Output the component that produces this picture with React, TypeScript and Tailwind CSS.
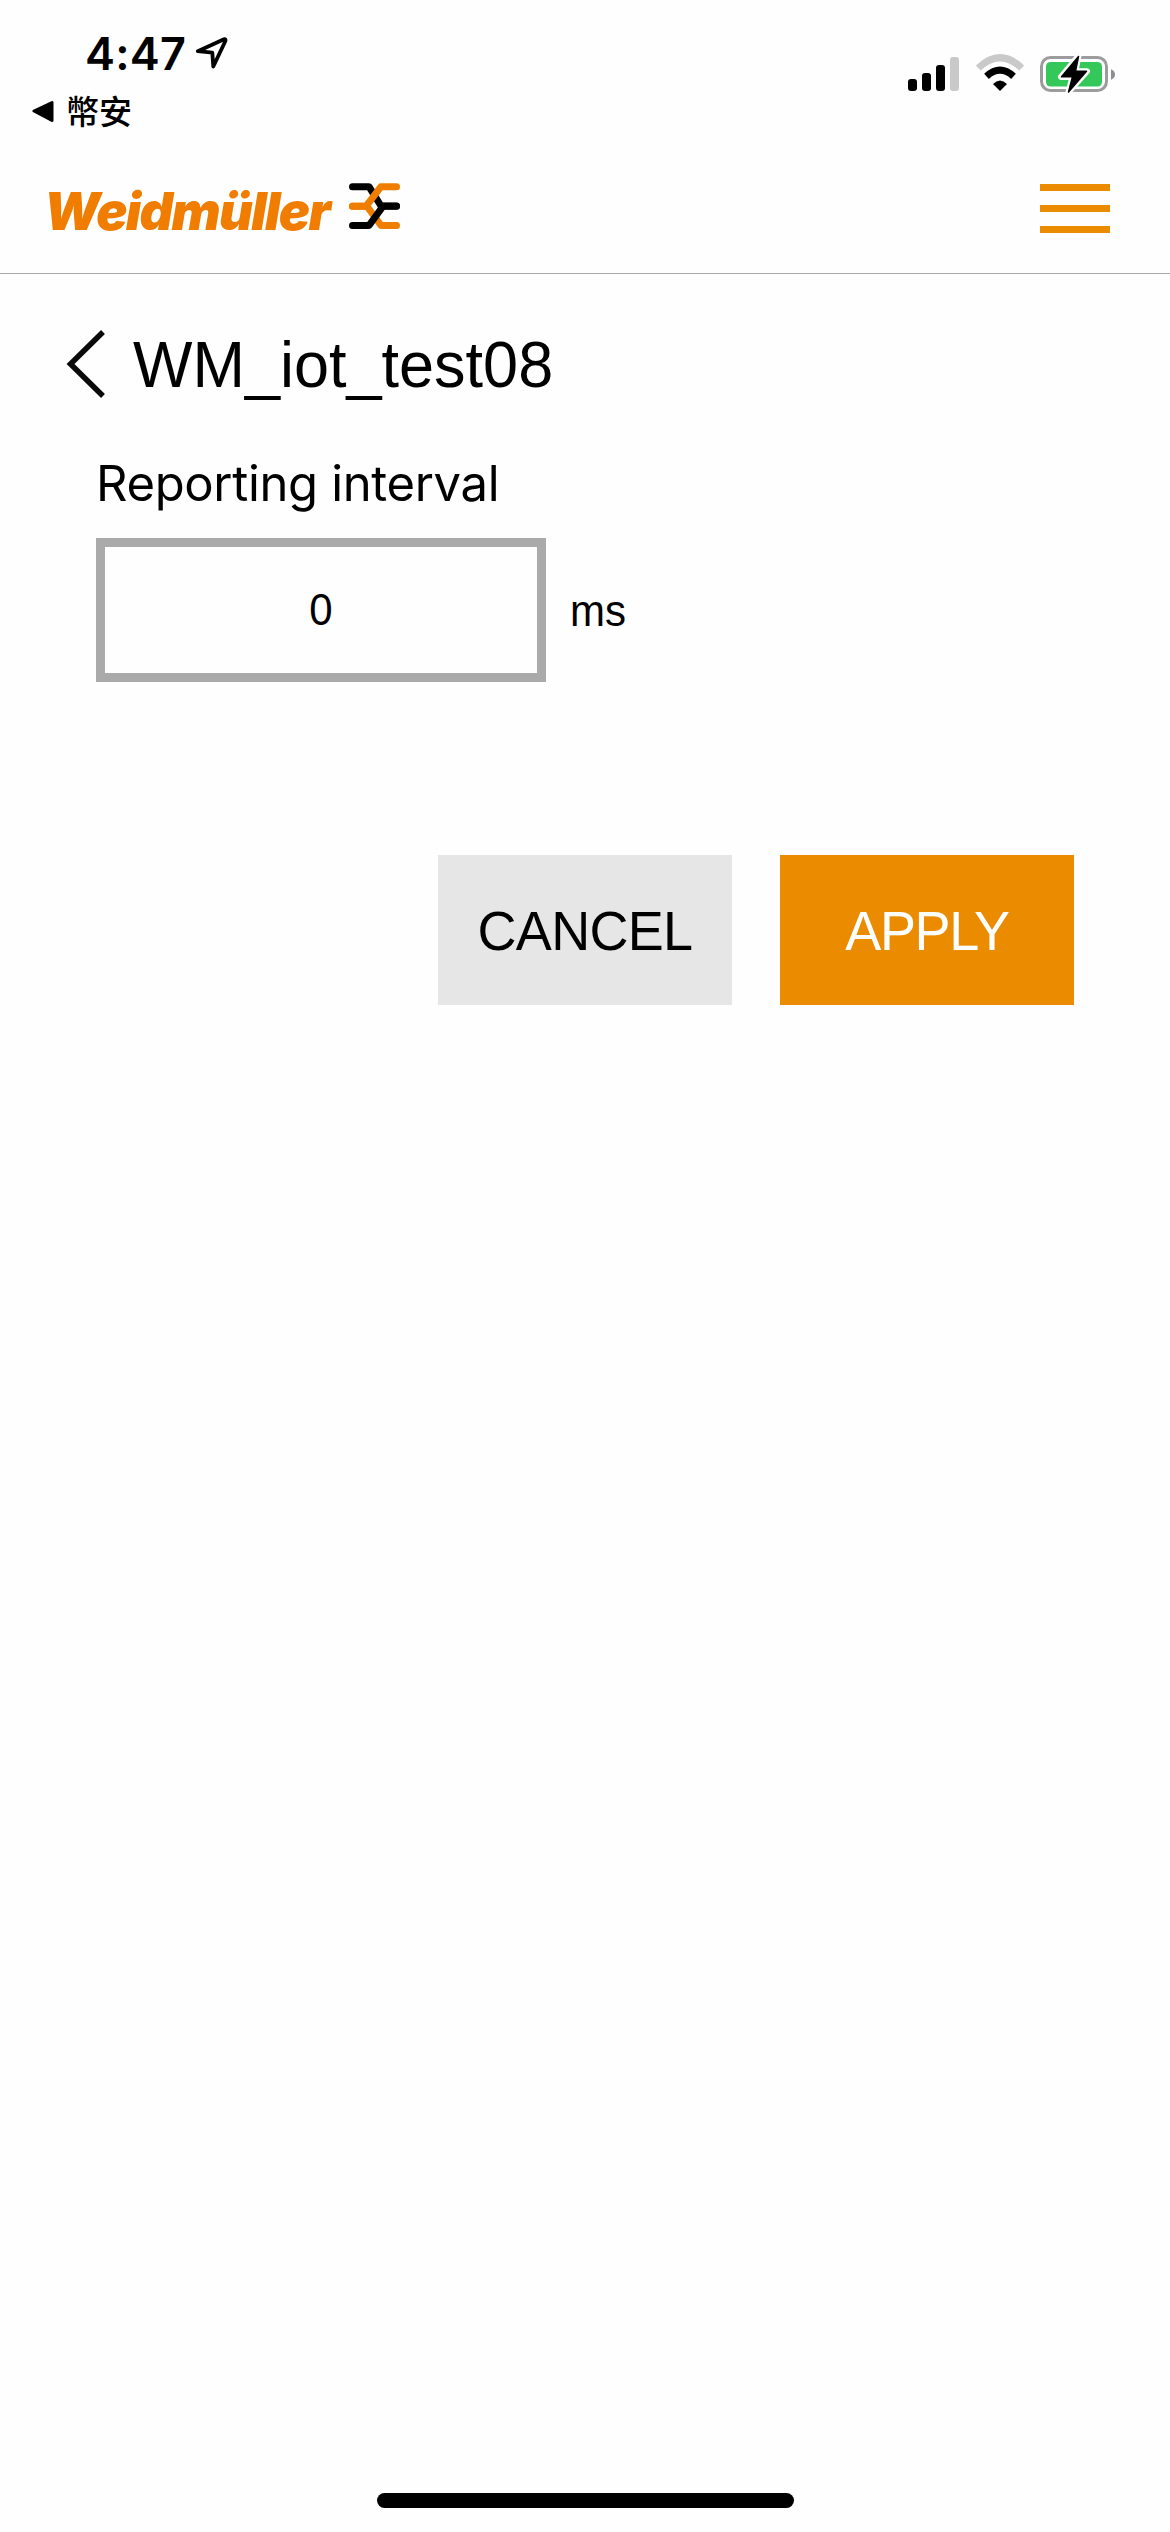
import React from "react";

function StatusBar() {
  return (
    <div className="flex h-[150px] justify-between">
      <div className="flex flex-col">
        <div className="flex h-[86px] items-start pl-[85px] pt-[26px]">
          <span className="w-[110px] whitespace-nowrap text-[45px] font-semibold leading-[55px] tracking-[0.2px]">4:47</span>
          <svg className="mt-[10px] h-[34px] w-[34px]" viewBox="0 0 34 34" fill="none" stroke="#000" strokeWidth="3.8" strokeLinejoin="round">
            <path d="M2.8 15.2 L29 3.2 Q31 2.6 30.4 5 L18.3 30.5 L17.3 16.6 Z" />
          </svg>
        </div>
        <div className="flex h-[50px] items-center pl-[32px]">
          <svg className="h-[22px] w-[22px]" viewBox="0 0 22 22">
            <path d="M2 11 L20 2.5 V20.5 Z" stroke="#000" strokeWidth="3" strokeLinejoin="round" />
          </svg>
          <span className="-mt-[3px] ml-[12px] font-['Noto_Sans_CJK_TC',sans-serif] text-[33px] font-medium leading-[50px]">幣安</span>
        </div>
      </div>
      <div className="flex items-start pr-[53px] pt-[54px]">
        <div className="mt-[3px] flex h-[34px] items-end gap-[5px]">
          <div className="h-[12px] w-[9px] rounded-[3px] bg-black" />
          <div className="h-[18px] w-[9px] rounded-[3px] bg-black" />
          <div className="h-[26px] w-[9px] rounded-[3px] bg-black" />
          <div className="h-[34px] w-[9px] rounded-[3px] bg-[#c9c9c9]" />
        </div>
        <svg className="ml-[16px] h-[38px] w-[50px]" viewBox="0 0 50 38" fill="none">
          <path d="M3.3 14 Q25 -6.6 46.7 14" stroke="#c9c9c9" strokeWidth="7" />
          <path d="M11.5 22.3 Q25 10 38.5 22.3" stroke="#000" strokeWidth="7" />
          <path d="M18 30 Q25 22.8 32 30 L25 37 Z" fill="#000" />
        </svg>
        <svg className="ml-[15px] h-[40px] w-[77px]" viewBox="0 0 77 40">
          <rect x="1.5" y="3.5" width="65" height="33" rx="9" fill="none" stroke="#9c9c9e" strokeWidth="3" />
          <path d="M71 15.3 Q75 17 75 20.5 Q75 24 71 25.7 Z" fill="#8e8e90" />
          <rect x="6" y="8" width="56" height="24.5" rx="4.5" fill="#34c759" />
          <path d="M38.5 2 L21 23 H32.5 L28.5 38 L47 17.3 H35.5 Z" fill="#fff" stroke="#fff" strokeWidth="6" strokeLinejoin="round" />
          <path d="M38.5 2.5 L21.5 22.8 H32.5 L28.5 38 L46.5 17.3 H35.5 Z" fill="#000" stroke="#000" strokeWidth="1.5" strokeLinejoin="round" />
        </svg>
      </div>
    </div>
  );
}

function Header() {
  return (
    <header className="flex h-[124px] items-start justify-between border-b border-[#aaaaaa] pl-[44px] pr-[60px]">
      <div className="flex">
        <span className="mt-[31px] w-[303px] whitespace-nowrap text-[52px] font-black italic leading-[62px] tracking-[-1.6px] text-[#f07d00]">
          Weidmüller
        </span>
        <svg className="mt-[32px] h-[50px] w-[56px]" viewBox="0 0 56 50" fill="none" strokeWidth="7" strokeLinecap="round" strokeLinejoin="round">
          <path d="M5.5 4.7 H22 L34 24 H49.5" stroke="#000" />
          <path d="M5.5 24.3 H20 L34 43.5 H49.5" stroke="#ef7d00" />
          <path d="M5.5 24.3 H19 L34 4.7 H49.5" stroke="#ef7d00" />
          <path d="M5.5 43.5 H22 L36 24.3 H49.5" stroke="#000" />
        </svg>
      </div>
      <button aria-label="Menu" className="mt-[34px] flex w-[70px] flex-col gap-[14px]">
        <span className="h-[7px] bg-[#eb8c00]" />
        <span className="h-[7px] bg-[#eb8c00]" />
        <span className="h-[7px] bg-[#eb8c00]" />
      </button>
    </header>
  );
}

export default function App() {
  return (
    <div className="flex h-[2532px] w-[1170px] flex-col bg-[#fefefe] font-['Inter',sans-serif] text-black">
      <StatusBar />
      <Header />
      <main className="flex-1 font-['Liberation_Sans',sans-serif]">
        <div className="flex h-[180px] items-start pl-[66px] pt-[55px]">
          <svg className="h-[70px] w-[40px]" viewBox="0 0 40 70" fill="none" stroke="#0a0a0a" strokeWidth="5.5">
            <path d="M37 3 L4.5 35 L37 67" />
          </svg>
          <h1 className="-mt-[1px] ml-[27px] scale-y-[1.04] whitespace-nowrap text-[63px] leading-[72px]">WM_iot_test08</h1>
        </div>
        <div className="px-[96px]">
          <label className="block h-[84px] whitespace-nowrap font-['Inter',sans-serif] text-[49px] leading-[60px] tracking-[-0.35px]">Reporting interval</label>
          <div className="flex items-center">
            <div className="flex h-[144px] w-[450px] items-center justify-center border-[9px] border-[#aaaaaa]">
              <span className="scale-y-[1.04] text-[42px] leading-[48px]">0</span>
            </div>
            <span className="ml-[24px] mt-[2px] scale-y-[1.04] text-[42px] leading-[48px]">ms</span>
          </div>
          <div className="mt-[173px] flex justify-end gap-[48px]">
            <button className="flex h-[150px] w-[294px] items-center justify-center bg-[#e6e6e6] text-[54px]">
              <span className="scale-y-[1.04] tracking-[-0.7px]">CANCEL</span>
            </button>
            <button className="flex h-[150px] w-[294px] items-center justify-center bg-[#eb8c00] text-[54px] text-white">
              <span className="scale-y-[1.04] tracking-[-1.3px]">APPLY</span>
            </button>
          </div>
        </div>
      </main>
      <div className="mx-auto mb-[24px] h-[15px] w-[417px] rounded-full bg-black" />
    </div>
  );
}
